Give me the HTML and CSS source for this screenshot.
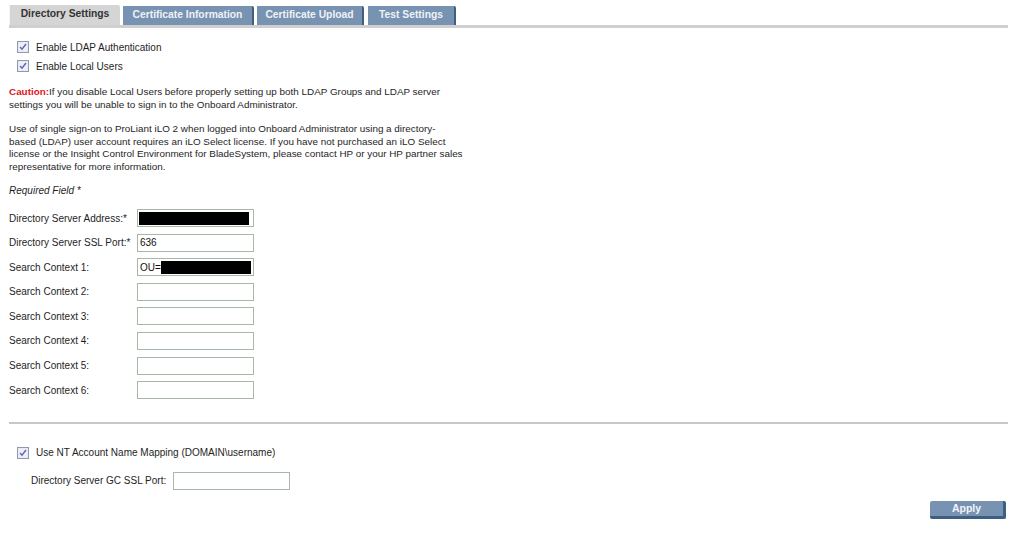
FILE: index.html
```html
<!DOCTYPE html>
<html>
<head>
<meta charset="utf-8">
<title>Directory Settings</title>
<link rel="stylesheet" href="styles.css">
</head>
<body>
<div class="page">
  <div class="tabs">
    <div class="tab active t1">Directory Settings</div>
    <div class="tab t2">Certificate Information</div>
    <div class="tab t3">Certificate Upload</div>
    <div class="tab t4">Test Settings</div>
  </div>

  <div class="checks">
    <label class="check"><svg class="cb" width="12" height="12" viewBox="0 0 12 12"><rect x="0.5" y="0.5" width="11" height="11" fill="#e4e6ec" stroke="#8e9aae"/><rect x="1.5" y="1.5" width="9" height="9" fill="#eef0f4"/><path d="M3 6 L5 8.2 L9 3" fill="none" stroke="#5a63c8" stroke-width="1.4"/></svg><span>Enable LDAP Authentication</span></label>
    <label class="check"><svg class="cb" width="12" height="12" viewBox="0 0 12 12"><rect x="0.5" y="0.5" width="11" height="11" fill="#e4e6ec" stroke="#8e9aae"/><rect x="1.5" y="1.5" width="9" height="9" fill="#eef0f4"/><path d="M3 6 L5 8.2 L9 3" fill="none" stroke="#5a63c8" stroke-width="1.4"/></svg><span>Enable Local Users</span></label>
  </div>

  <p class="text caution"><span class="red">Caution:</span><span>If you disable Local Users before properly setting up both LDAP Groups and LDAP server settings you will be unable to sign in to the Onboard Administrator.</span></p>

  <p class="text info">Use of single sign-on to ProLiant iLO 2 when logged into Onboard Administrator using a directory-<br>based (LDAP) user account requires an iLO Select license. If you have not purchased an iLO Select<br>license or the Insight Control Environment for BladeSystem, please contact HP or your HP partner sales<br>representative for more information.</p>

  <p class="text req">Required Field *</p>

  <div class="form">
    <div class="row"><span class="lbl">Directory Server Address:*</span><span class="inp"><span class="redact full"></span></span></div>
    <div class="row"><span class="lbl">Directory Server SSL Port:*</span><span class="inp">636</span></div>
    <div class="row"><span class="lbl">Search Context 1:</span><span class="inp">OU=<span class="redact part"></span></span></div>
    <div class="row"><span class="lbl">Search Context 2:</span><span class="inp"></span></div>
    <div class="row"><span class="lbl">Search Context 3:</span><span class="inp"></span></div>
    <div class="row"><span class="lbl">Search Context 4:</span><span class="inp"></span></div>
    <div class="row"><span class="lbl">Search Context 5:</span><span class="inp"></span></div>
    <div class="row"><span class="lbl">Search Context 6:</span><span class="inp"></span></div>
  </div>

  <div class="sep"></div>

  <label class="check nt"><svg class="cb" width="12" height="12" viewBox="0 0 12 12"><rect x="0.5" y="0.5" width="11" height="11" fill="#e4e6ec" stroke="#8e9aae"/><rect x="1.5" y="1.5" width="9" height="9" fill="#eef0f4"/><path d="M3 6 L5 8.2 L9 3" fill="none" stroke="#5a63c8" stroke-width="1.4"/></svg><span>Use NT Account Name Mapping (DOMAIN\username)</span></label>

  <div class="gcrow"><span class="gclbl">Directory Server GC SSL Port:</span><span class="inp"></span></div>

  <div class="actions"><button class="apply">Apply</button></div>
</div>
</body>
</html>
```
FILE: styles.css
```css
html, body {
  margin: 0;
  padding: 0;
  background: #ffffff;
}
body {
  font-family: "Liberation Sans", Arial, sans-serif;
  font-size: 10px;
  color: #1e1e1e;
}
.page {
  padding: 5px 16px 0 9px;
}
.tabs {
  display: flex;
  align-items: flex-end;
  height: 20px;
  border-bottom: 3px solid #cfcfcf;
}
.tab {
  box-sizing: border-box;
  height: 19px;
  line-height: 18px;
  text-align: center;
  font-weight: bold;
  font-size: 10.3px;
  color: #eef2f7;
  background: #7893b1;
  border-right: 2px solid #3f5f83;
  border-top-right-radius: 2px;
  margin-right: 3px;
}
.tab.active {
  background: #d5d5d5;
  color: #333333;
  border-right: none;
  border-left: 1px solid #f4f4f4;
  height: 20px;
}
.t1 { width: 111px; margin-right: 3px; }
.t2 { width: 131px; }
.t3 { width: 107px; margin-right: 4px; }
.t4 { width: 88px; }

.checks {
  display: flex;
  flex-direction: column;
  gap: 7px;
  margin-top: 13px;
  padding-left: 8px;
}
.check {
  display: flex;
  align-items: center;
  height: 12px;
  gap: 7px;
}
.cb {
  display: block;
  flex: none;
}
.text {
  margin: 0;
  width: 470px;
  line-height: 12.5px;
}
.caution {
  margin-top: 14px;
  width: 462px;
  font-size: 9.9px;
}
.red {
  color: #e0141c;
  font-weight: bold;
}
.info {
  margin-top: 12px;
  font-size: 9.9px;
}
.req {
  margin-top: 12px;
  font-style: italic;
}
.form {
  margin-top: 12px;
  display: flex;
  flex-direction: column;
  gap: 7.6px;
}
.row {
  display: flex;
  align-items: center;
  height: 17px;
}
.lbl {
  width: 128px;
  flex: none;
}
.inp {
  box-sizing: border-box;
  display: flex;
  align-items: center;
  width: 117px;
  height: 18px;
  border: 1px solid #a7b8a7;
  background: #ffffff;
  padding: 1px 2px;
  font-size: 10px;
  color: #111;
}
.redact {
  display: block;
  background: #000;
  height: 13px;
}
.redact.full { width: 110px; margin-left: -1px; }
.redact.part { width: 90px; }

.sep {
  margin-top: 23px;
  height: 2px;
  background: #c8c8c8;
}
.nt {
  margin-top: 23px;
  padding-left: 8px;
}
.gcrow {
  display: flex;
  align-items: center;
  margin-top: 13px;
  padding-left: 22px;
}
.gclbl {
  width: 142px;
  flex: none;
}
.actions {
  display: flex;
  justify-content: flex-end;
  margin-top: 11px;
  padding-right: 2px;
}
.apply {
  box-sizing: border-box;
  width: 76px;
  height: 18px;
  padding: 0;
  border: none;
  border-right: 3px solid #3d5f84;
  border-bottom: 3px solid #3d5f84;
  border-radius: 2px;
  background: #7893b1;
  color: #f2f5f9;
  font-family: "Liberation Sans", Arial, sans-serif;
  font-weight: bold;
  font-size: 10.5px;
  line-height: 14px;
}
```
